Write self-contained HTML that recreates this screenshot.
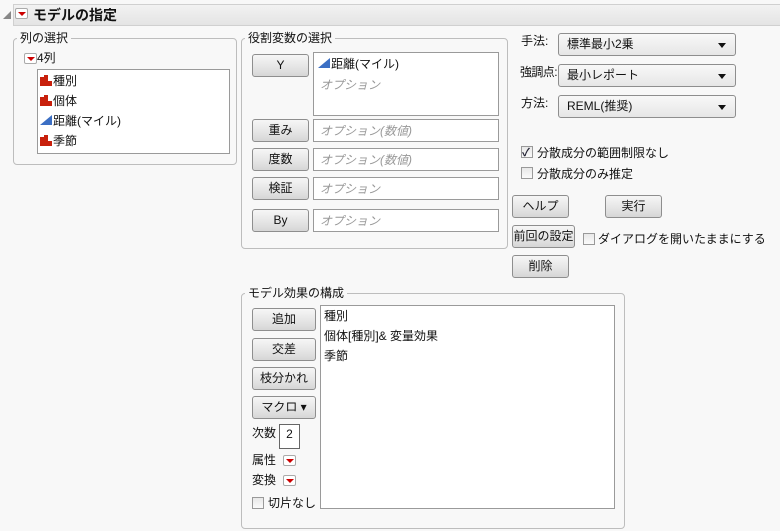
<!DOCTYPE html>
<html><head><meta charset="utf-8"><style>
*{box-sizing:border-box;margin:0;padding:0}
body{width:780px;height:531px;background:#f8f8f8;font-family:"Liberation Sans","Noto Sans CJK JP",sans-serif;font-size:12px;color:#111;position:relative;overflow:hidden}
.a{position:absolute;white-space:nowrap;line-height:14px}
.grp{position:absolute;border:1px solid #bdbdbd;border-radius:4px}
.lbl{position:absolute;background:#f8f8f8;padding:0 3px;line-height:14px}
.btn{position:absolute;border:1px solid #8e8e8e;border-radius:3px;background:linear-gradient(#f6f6f6,#e4e4e4 60%,#d6d6d6);text-align:center;font-size:12px;line-height:21px}
.box{position:absolute;border:1px solid #9a9a9a;background:#fff}
.opt{color:#999;font-style:italic}
.dd{position:absolute;border:1px solid #8e8e8e;border-radius:3px;background:linear-gradient(#f8f8f8,#e6e6e6);padding-left:8px;line-height:21px}
.dd:after{content:"";position:absolute;right:9px;top:9px;border:4px solid transparent;border-top:5px solid #111;border-bottom:0}
.red{position:absolute;width:13px;height:11px;border:1px solid #aaa;border-radius:2px;background:#fff}
.red:after{content:"";position:absolute;left:2px;top:3px;border:4px solid transparent;border-top:4px solid #c00;border-bottom:0}
.cb{position:absolute;width:12px;height:12px;border:1px solid #999;background:linear-gradient(#e8e8e8,#fafafa)}
.bar{display:inline-block;width:12px;height:11px;vertical-align:-1px;margin-right:1px;position:relative}
.bar i{position:absolute;bottom:0;background:#c8200c;width:4px}
.tri{display:inline-block;width:0;height:0;border-left:12px solid transparent;border-bottom:10px solid #3b6fc4;margin-right:1px;vertical-align:0}
</style></head><body>
<div style="position:absolute;left:13px;top:4px;width:767px;height:22px;background:linear-gradient(#f2f2f2,#e4e4e4);border:1px solid #d0d0d0;border-right:0"></div>
<div class="a" style="left:3px;top:9px;font-size:8px;color:#888">◢</div>
<div class="red" style="left:15px;top:8px"></div>
<div class="a" style="left:33px;top:7px;font-size:14px;font-weight:bold;line-height:16px">モデルの指定</div>

<div class="grp" style="left:13px;top:38px;width:224px;height:127px"></div>
<div class="lbl" style="left:17px;top:31px">列の選択</div>
<div class="red" style="left:24px;top:53px"></div>
<div class="a" style="left:37px;top:51px">4列</div>
<div class="box" style="left:37px;top:69px;width:193px;height:85px"></div>
<div class="a" style="left:40px;top:74px"><span class="bar"><i style="left:0;height:9px"></i><i style="left:4px;height:11px"></i><i style="left:8px;height:5px"></i></span>種別</div>
<div class="a" style="left:40px;top:94px"><span class="bar"><i style="left:0;height:9px"></i><i style="left:4px;height:11px"></i><i style="left:8px;height:5px"></i></span>個体</div>
<div class="a" style="left:40px;top:114px"><span class="tri"></span>距離(マイル)</div>
<div class="a" style="left:40px;top:134px"><span class="bar"><i style="left:0;height:9px"></i><i style="left:4px;height:11px"></i><i style="left:8px;height:5px"></i></span>季節</div>

<div class="grp" style="left:241px;top:38px;width:267px;height:211px"></div>
<div class="lbl" style="left:245px;top:31px">役割変数の選択</div>
<div class="btn" style="left:252px;top:54px;width:57px;height:23px">Y</div>
<div class="box" style="left:313px;top:52px;width:186px;height:64px"></div>
<div class="a" style="left:318px;top:57px"><span class="tri"></span>距離(マイル)</div>
<div class="a opt" style="left:320px;top:78px">オプション</div>
<div class="btn" style="left:252px;top:119px;width:57px;height:23px">重み</div>
<div class="box" style="left:313px;top:119px;width:186px;height:23px"></div>
<div class="a opt" style="left:320px;top:124px">オプション(数値)</div>
<div class="btn" style="left:252px;top:148px;width:57px;height:23px">度数</div>
<div class="box" style="left:313px;top:148px;width:186px;height:23px"></div>
<div class="a opt" style="left:320px;top:153px">オプション(数値)</div>
<div class="btn" style="left:252px;top:177px;width:57px;height:23px">検証</div>
<div class="box" style="left:313px;top:177px;width:186px;height:23px"></div>
<div class="a opt" style="left:320px;top:182px">オプション</div>
<div class="btn" style="left:252px;top:209px;width:57px;height:23px">By</div>
<div class="box" style="left:313px;top:209px;width:186px;height:23px"></div>
<div class="a opt" style="left:320px;top:214px">オプション</div>

<div class="a" style="left:521px;top:34px">手法:</div>
<div class="dd" style="left:558px;top:33px;width:178px;height:23px">標準最小2乗</div>
<div class="a" style="left:520px;top:65px;letter-spacing:-0.6px">強調点:</div>
<div class="dd" style="left:558px;top:64px;width:178px;height:23px">最小レポート</div>
<div class="a" style="left:521px;top:96px">方法:</div>
<div class="dd" style="left:558px;top:95px;width:178px;height:23px">REML(推奨)</div>
<div class="cb" style="left:521px;top:146px"><span style="position:absolute;left:0;top:-3px;font-size:11px;color:#223;font-weight:bold">✓</span></div>
<div class="a" style="left:537px;top:146px">分散成分の範囲制限なし</div>
<div class="cb" style="left:521px;top:167px"></div>
<div class="a" style="left:537px;top:167px">分散成分のみ推定</div>
<div class="btn" style="left:512px;top:195px;width:57px;height:23px">ヘルプ</div>
<div class="btn" style="left:605px;top:195px;width:57px;height:23px">実行</div>
<div class="btn" style="left:512px;top:225px;width:63px;height:23px">前回の設定</div>
<div class="cb" style="left:583px;top:233px"></div>
<div class="a" style="left:598px;top:232px">ダイアログを開いたままにする</div>
<div class="btn" style="left:512px;top:255px;width:57px;height:23px">削除</div>

<div class="grp" style="left:241px;top:293px;width:384px;height:236px"></div>
<div class="lbl" style="left:245px;top:286px">モデル効果の構成</div>
<div class="btn" style="left:252px;top:308px;width:64px;height:23px">追加</div>
<div class="btn" style="left:252px;top:338px;width:64px;height:23px">交差</div>
<div class="btn" style="left:252px;top:367px;width:64px;height:23px">枝分かれ</div>
<div class="btn" style="left:252px;top:396px;width:64px;height:23px">マクロ ▾</div>
<div class="a" style="left:252px;top:426px">次数</div>
<div class="box" style="left:279px;top:424px;width:21px;height:25px;border-color:#666;text-align:center;line-height:18px">2</div>
<div class="a" style="left:252px;top:453px">属性</div>
<div class="red" style="left:283px;top:455px"></div>
<div class="a" style="left:252px;top:473px">変換</div>
<div class="red" style="left:283px;top:475px"></div>
<div class="cb" style="left:252px;top:497px"></div>
<div class="a" style="left:268px;top:496px">切片なし</div>
<div class="box" style="left:320px;top:305px;width:295px;height:204px"></div>
<div class="a" style="left:324px;top:309px">種別</div>
<div class="a" style="left:324px;top:329px">個体[種別]&amp; 変量効果</div>
<div class="a" style="left:324px;top:349px">季節</div>
</body></html>
